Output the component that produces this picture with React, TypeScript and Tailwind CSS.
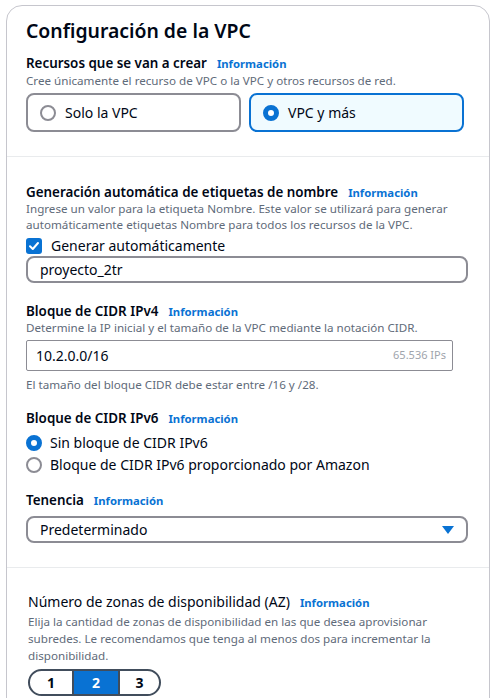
import React from "react";

const Info = () => (
  <span className="text-[11.3px] leading-[12px] font-bold text-[#0972d3] ml-[10px]">Información</span>
);

const Label = ({ children }: { children: React.ReactNode }) => (
  <div className="flex items-baseline h-[18px] leading-[18px]">
    <span className="text-[13.4px] font-semibold">{children}</span>
    <Info />
  </div>
);

const Radio = ({ checked }: { checked: boolean }) =>
  checked ? (
    <span className="inline-block w-[16px] h-[16px] rounded-full border-[5px] border-[#0972d3] bg-white shrink-0" />
  ) : (
    <span className="inline-block w-[16px] h-[16px] rounded-full border-2 border-[#8c8c94] bg-white shrink-0" />
  );

export default function App() {
  return (
    <div
      className="w-[499px] h-[698px] bg-white overflow-hidden pt-[5px] pl-[6px] text-[#000716]"
      style={{ fontFamily: '"Noto Sans", "Open Sans", sans-serif' }}
    >
      <div className="w-[484px] h-[720px] border border-[#c6c6cd] rounded-t-[16px]">
        {/* Section 1 */}
        <div className="px-[19px] pt-[11px] pb-[24px] border-b border-[#e9ebed]">
          <h1 className="text-[19.4px] font-semibold leading-[28px]">Configuración de la VPC</h1>
          <div className="mt-[9px]">
            <Label>Recursos que se van a crear</Label>
          </div>
          <p className="text-[11.65px] leading-[16px] text-[#5f6b7a] mt-[1px]">
            Cree únicamente el recurso de VPC o la VPC y otros recursos de red.
          </p>
          <div className="mt-[4px] flex gap-[8px] w-[438px]">
            <div className="flex-1 h-[39px] border-2 border-[#8c8c94] rounded-[8px] flex items-center pl-[12px] gap-[9px] text-[14px]">
              <Radio checked={false} />
              <span>Solo la VPC</span>
            </div>
            <div className="flex-1 h-[39px] border-2 border-[#0972d3] bg-[#f0fbff] rounded-[8px] flex items-center pl-[12px] gap-[9px] text-[14px]">
              <Radio checked={true} />
              <span>VPC y más</span>
            </div>
          </div>
        </div>

        {/* Section 2 */}
        <div className="px-[19px] pt-[26px] pb-[24px] border-b border-[#e9ebed]">
          <Label>Generación automática de etiquetas de nombre</Label>
          <p className="text-[11.65px] leading-[16px] text-[#5f6b7a] mt-[0px] w-[440px]">
            Ingrese un valor para la etiqueta Nombre. Este valor se utilizará para generar automáticamente etiquetas Nombre para todos los recursos de la VPC.
          </p>
          <div className="mt-[4px] flex items-center gap-[9px] text-[14px] h-[18px] leading-[18px]">
            <span className="w-[16px] h-[16px] rounded-[3px] bg-[#0972d3] flex items-center justify-center">
              <svg width="12" height="12" viewBox="0 0 12 12">
                <path d="M2 6.2 L4.8 9 L10 3" fill="none" stroke="white" strokeWidth="2" strokeLinecap="round" strokeLinejoin="round" />
              </svg>
            </span>
            <span>Generar automáticamente</span>
          </div>
          <div className="mt-[1px] w-[442px] h-[27px] border-2 border-[#8c8c94] rounded-[8px] flex items-center pl-[12px] text-[14px]">
            proyecto_2tr
          </div>

          <div className="mt-[19px]">
            <Label>Bloque de CIDR IPv4</Label>
          </div>
          <p className="text-[11.65px] leading-[16px] text-[#5f6b7a] mt-[0px]">
            Determine la IP inicial y el tamaño de la VPC mediante la notación CIDR.
          </p>
          <div className="mt-[4px] w-[427px] h-[31px] border border-[#8c8c94] rounded-[2px] flex items-center justify-between pl-[9px] pr-[6px]">
            <span className="text-[14px]">10.2.0.0/16</span>
            <span className="text-[11px] text-[#a0a4ac]">65.536 IPs</span>
          </div>
          <p className="text-[11.65px] leading-[16px] text-[#5f6b7a] mt-[6px]">
            El tamaño del bloque CIDR debe estar entre /16 y /28.
          </p>

          <div className="mt-[16px]">
            <Label>Bloque de CIDR IPv6</Label>
          </div>
          <div className="mt-[6px] flex items-center gap-[8px] text-[14px] h-[20px] leading-[20px]">
            <Radio checked={true} />
            <span>Sin bloque de CIDR IPv6</span>
          </div>
          <div className="mt-[2px] flex items-center gap-[8px] text-[14px] h-[20px] leading-[20px]">
            <Radio checked={false} />
            <span>Bloque de CIDR IPv6 proporcionado por Amazon</span>
          </div>

          <div className="mt-[16px]">
            <Label>Tenencia</Label>
          </div>
          <div className="mt-[7px] w-[442px] h-[27px] border-2 border-[#8c8c94] rounded-[8px] flex items-center justify-between pl-[12px] pr-[12px] text-[14px]">
            <span>Predeterminado</span>
            <svg width="12" height="8" viewBox="0 0 12 8">
              <path d="M0 0 H12 L6 8 Z" fill="#0972d3" />
            </svg>
          </div>
        </div>

        {/* Section 3 */}
        <div className="pl-[21px] pr-[19px] pt-[25px]">
          <div className="flex items-baseline h-[18px] leading-[18px]">
            <span className="text-[14px]">Número de zonas de disponibilidad (AZ)</span>
            <Info />
          </div>
          <p className="text-[11.65px] leading-[17px] text-[#5f6b7a] mt-[2px] w-[420px]">
            Elija la cantidad de zonas de disponibilidad en las que desea aprovisionar subredes. Le recomendamos que tenga al menos dos para incrementar la disponibilidad.
          </p>
          <div className="mt-[5px] flex w-[133px] h-[27px] border-2 border-[#414d5c] rounded-full overflow-hidden text-[14px] font-bold">
            <div className="w-[44px] flex items-center justify-center border-r-2 border-[#414d5c]">1</div>
            <div className="w-[44px] flex items-center justify-center bg-[#0972d3] text-white">2</div>
            <div className="flex-1 flex items-center justify-center border-l-2 border-[#414d5c]">3</div>
          </div>
        </div>
      </div>
    </div>
  );
}
